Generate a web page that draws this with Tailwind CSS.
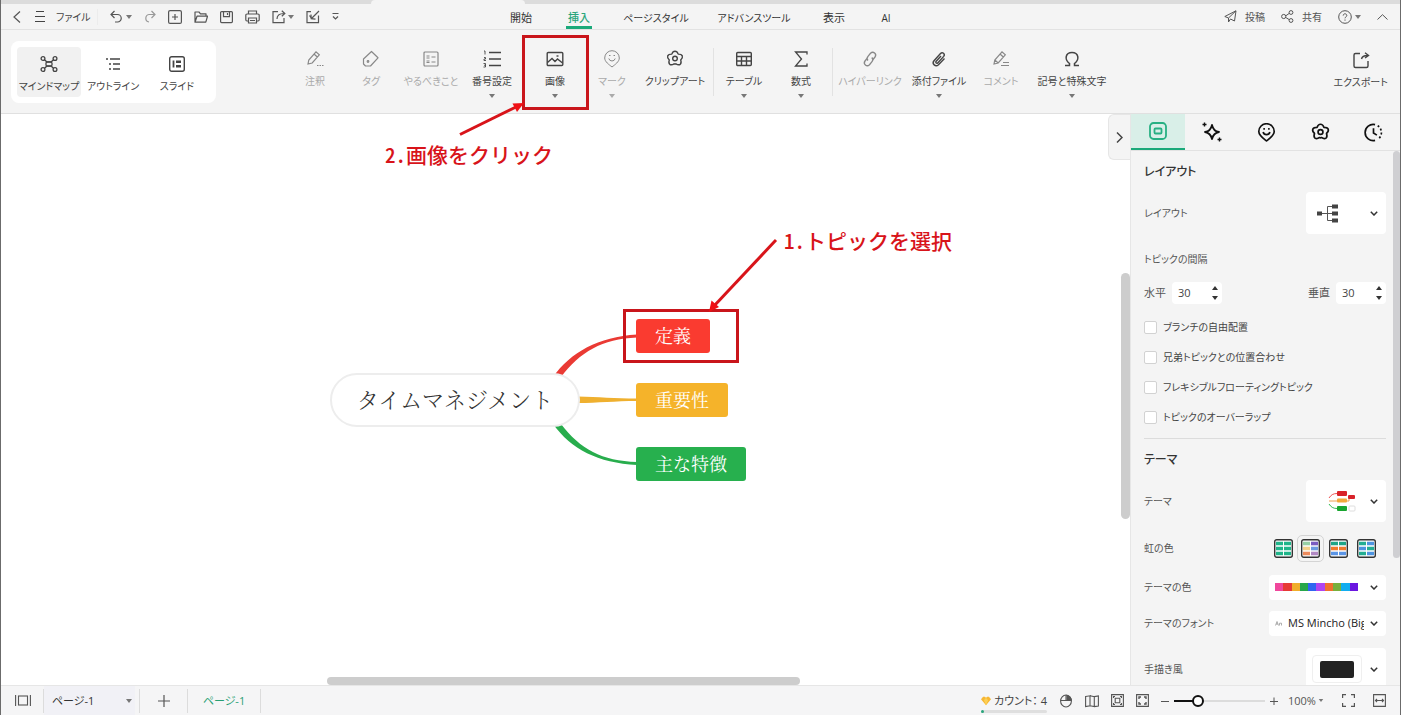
<!DOCTYPE html>
<html lang="ja">
<head>
<meta charset="utf-8">
<meta name="viewport" content="width=device-width, initial-scale=1">
<title>マインドマップ</title>
<script src="https://cdn.jsdelivr.net/npm/@tailwindcss/browser@4"></script>
</head>
<body class="bg-white">
<svg class="hidden">
  <symbol id="caret" viewBox="0 0 6 4"><path d="M0 0h6L3 4z" fill="currentColor"/></symbol>
  <symbol id="chev" viewBox="0 0 8 5"><path d="M.8.8 4 4 7.200.8" fill="none" stroke="currentColor" stroke-width="1.500"/></symbol>
  <symbol id="flower" viewBox="0 0 18 18"><path d="M9 1.200C10.600 1.200 11.700 2.600 12.200 4.100c1.600 0 3.400.3 4.100 1.800.6 1.500-.5 2.900-1.600 4 .5 1.500.8 3.300-.5 4.400-1.300.9-3 .3-4.300-.5-.6.3-1.200.3-1.800 0-1.300.8-3 1.400-4.300.5-1.300-1.100-1-2.900-.5-4.400-1.100-1.100-2.200-2.500-1.600-4 .7-1.500 2.500-1.800 4.100-1.800C6.300 2.600 7.400 1.200 9 1.200z" fill="none" stroke="currentColor" stroke-linejoin="round"/><circle cx="9" cy="8.500" r="2.300" fill="none" stroke="currentColor"/></symbol>
  <symbol id="pin" viewBox="0 0 18 18"><path d="M9 17C6 14.600 1.700 11.700 1.700 8a7.300 7.300 0 0 1 14.600 0c0 3.700-4.300 6.600-7.300 9z" fill="none" stroke="currentColor" stroke-linejoin="round"/><path d="M5.800 8.500a3.300 3.300 0 0 0 6.400 0" fill="none" stroke="currentColor"/><path d="M6 5.500h1.500M10.500 5.500H12" stroke="currentColor"/></symbol>
</svg>

<div class="relative flex h-screen flex-col overflow-hidden border-x border-[#6b6b6b] bg-[#f4f4f4] font-['Open_Sans','Noto_Sans_CJK_JP',sans-serif] text-[10px] leading-[14px] text-[#333] [font-feature-settings:'palt']">

  <!-- window tab strip -->
  <div class="flex h-1 shrink-0 bg-[#dcdcdc]"><div class="ml-[370px] w-[154px] rounded-t-sm bg-[#f4f4f4]"></div></div>

  <!-- title bar -->
  <header class="flex h-[26px] shrink-0 items-stretch border-b border-[#e2e2e2] text-[#555]">
    <div class="flex w-[492px] shrink-0 items-center">
      <button aria-label="戻る" class="ml-3 w-3"><svg class="h-3 w-2" viewBox="0 0 8 12" fill="none" stroke="currentColor" stroke-width="1.200"><path d="M7 .5 1 6l6 5.500"/></svg></button>
      <button class="ml-[10px] flex items-center gap-[10px] text-[#444]"><svg class="h-[11px] w-[11px]" viewBox="0 0 11 11" stroke="currentColor"><path d="M1 .5h8M0 5.500h10M0 10.500h10"/></svg>ファイル</button>
      <span class="ml-[6px] h-4 w-px bg-[#ececec]"></span>
      <button aria-label="元に戻す" class="ml-3 flex items-center gap-1"><svg class="h-[13px] w-3" viewBox="0 0 12 13" fill="none" stroke="currentColor" stroke-width="1.200"><path d="M4.500 1 1 4.500 4.500 8M1 4.500h6.500a3.500 3.500 0 0 1 0 7.500H5"/></svg><svg class="h-1 w-[6px] text-[#777]"><use href="#caret"/></svg></button>
      <button aria-label="やり直す" class="ml-3 text-[#999]"><svg class="h-[13px] w-3" viewBox="0 0 12 13" fill="none" stroke="currentColor" stroke-width="1.200"><path d="M7.500 1 11 4.500 7.500 8M11 4.500H5A3.800 3.800 0 0 0 5 12"/></svg></button>
      <div class="ml-3 flex items-center gap-3">
        <button aria-label="新規"><svg class="size-[14px]" viewBox="0 0 14 14" fill="none" stroke="currentColor" stroke-width="1.200"><rect x=".6" y=".6" width="12.800" height="12.800" rx="1.500"/><path d="M7 4v6M4 7h6"/></svg></button>
        <button aria-label="開く"><svg class="size-[14px]" viewBox="0 0 14 14" fill="none" stroke="currentColor" stroke-width="1.200" stroke-linejoin="round"><path d="M1 12V2h4l1.500 1.800H12V6M1 12.200 3 6.200h10.500l-1.700 6z"/></svg></button>
        <button aria-label="保存"><svg class="h-[14px] w-[13px]" viewBox="0 0 13 14" fill="none" stroke="currentColor" stroke-width="1.200"><rect x=".6" y="1.600" width="11.800" height="11" rx="1"/><path d="M3.500 1.600v5h6v-5M7.500 3v2"/></svg></button>
        <button aria-label="印刷"><svg class="h-[14px] w-[15px]" viewBox="0 0 15 14" fill="none" stroke="currentColor" stroke-width="1.200"><path d="M3.500 4V1h8v3M3.500 11H2a1.200 1.200 0 0 1-1.200-1.200V5.200A1.200 1.200 0 0 1 2 4h11a1.200 1.200 0 0 1 1.200 1.200v4.600A1.200 1.200 0 0 1 13 11h-1.500"/><path d="M3.500 8h8v5h-8zM5 10.500h5"/></svg></button>
        <button aria-label="共有先" class="flex items-center gap-[2px]"><svg class="size-[14px]" viewBox="0 0 14 14" fill="none" stroke="currentColor" stroke-width="1.200"><path d="M6 1.600H1v11h11V8"/><path d="M5 9c0-3.500 2-5.500 7-5.500M9.800.8l3 2.700-3 2.700"/></svg><svg class="h-1 w-[6px] text-[#777]"><use href="#caret"/></svg></button>
        <button aria-label="取り込み"><svg class="size-[14px]" viewBox="0 0 14 14" fill="none" stroke="currentColor" stroke-width="1.200"><path d="M5 1.600H1v11h11.500V5.500"/><path d="M13 1 5.500 8.500M9.500 9.200 5.200 8.700 5 4.500M3.500 5.500l2 3"/></svg></button>
        <button aria-label="その他"><svg class="h-[9px] w-[7px]" viewBox="0 0 7 9" fill="none" stroke="currentColor" stroke-width="1.200"><path d="M.5 1.500h6M1 4.500 3.500 7 6 4.500"/></svg></button>
      </div>
    </div>
    <nav class="flex shrink-0 text-[#333]">
      <button class="w-14 pt-[2px] text-[11px]">開始</button>
      <button class="relative w-[60px] pt-[2px] text-[11px] font-medium text-[#2aa57c]">挿入<span class="absolute bottom-0 left-[17px] h-[3px] w-[26px] bg-[#1aa97a]"></span></button>
      <button class="w-[94px] pt-[2px]">ページスタイル</button>
      <button class="w-[102px] pt-[2px]">アドバンスツール</button>
      <button class="w-[58px] pt-[2px] text-[11px]">表示</button>
      <button class="w-[46px] pt-[2px]">AI</button>
    </nav>
    <div class="ml-auto flex items-center pr-3">
      <button class="flex items-center gap-2"><svg class="h-[13px] w-[13px]" viewBox="0 0 13 13" fill="none" stroke="currentColor" stroke-linejoin="round"><path d="M.8 6.500 12 .8 10.500 11 6.500 9 4.500 12V8zM4.500 8 12 .8"/></svg>投稿</button>
      <button class="ml-4 flex items-center gap-2"><svg class="h-[13px] w-[13px]" viewBox="0 0 13 13" fill="none" stroke="currentColor"><circle cx="2.700" cy="6.500" r="2.100"/><circle cx="10" cy="2.500" r="1.900"/><circle cx="10" cy="10.500" r="1.900"/><path d="M4.800 5.800 8.200 3.400M4.800 7.500 8.200 9.600"/></svg>共有</button>
      <button aria-label="ヘルプ" class="ml-4 flex items-center gap-[3px]"><svg class="size-[14px]" viewBox="0 0 14 14" fill="none" stroke="currentColor"><circle cx="7" cy="7" r="6.300"/><path d="M5.200 5.600c0-2.400 3.600-2.400 3.600 0 0 1.200-1.800 1.300-1.800 2.700M7 9.500v1.200"/></svg><svg class="h-1 w-[6px] text-[#777]"><use href="#caret"/></svg></button>
      <button aria-label="折りたたむ" class="ml-4"><svg class="h-[6px] w-[11px]" viewBox="0 0 11 6" fill="none" stroke="currentColor"><path d="M.5 5.500 5.500.7l5 4.800"/></svg></button>
    </div>
  </header>

  <!-- ribbon -->
  <section class="flex h-[84px] shrink-0 border-b border-[#e0e0e0] text-[#444]">
    <div class="ml-[10px] mt-[11px] flex h-[62px] w-[205px] shrink-0 rounded-lg bg-white p-[6px]">
      <button class="flex w-16 flex-col items-center rounded bg-[#f1f1f1] pt-2"><svg class="size-[18px]" viewBox="0 0 18 18" fill="none" stroke="currentColor" stroke-width="1.300"><circle cx="3" cy="3.500" r="1.900"/><circle cx="15" cy="3.500" r="1.900"/><circle cx="3" cy="14.500" r="1.900"/><circle cx="15" cy="14.500" r="1.900"/><path d="M4.500 4.800 7 7h4l2.500-2.200M4.500 13.200 7 11h4l2.500 2.200"/><rect x="6" y="6.800" width="6" height="4.400" rx="1.500"/></svg><span class="mt-[6px]">マインドマップ</span></button>
      <button class="flex w-16 flex-col items-center pt-2"><svg class="size-[18px]" viewBox="0 0 18 18" stroke="currentColor" stroke-width="1.300"><path d="M2 4h2M6 4h10M5 9h2M9 9h7M5 14h2M9 14h7"/></svg><span class="mt-[6px]">アウトライン</span></button>
      <button class="flex w-16 flex-col items-center pt-2"><svg class="size-[18px]" viewBox="0 0 18 18" fill="none" stroke="currentColor" stroke-width="1.400"><rect x="1.700" y="1.700" width="14.600" height="14.600" rx="2"/><path d="M5.500 5.500v7" stroke-width="1.800"/><path d="M8 6.800h5M8 11.200h5" stroke-width="2.600"/></svg><span class="mt-[6px]">スライド</span></button>
    </div>
    <div class="ml-[75px] flex shrink-0">
      <button class="flex w-12 flex-col items-center pt-5 text-[#aaa]"><svg class="size-[18px] text-[#888]" viewBox="0 0 18 18" fill="none" stroke="currentColor" stroke-width="1.200"><path d="m2 14 .8-4L10 1.800l3.300 3L6.200 13zM8 4l3.300 3M11 15.500h1.500M13.500 15.500H15M16 15.500h1.500"/></svg><span class="mt-[6px]">注釈</span></button>
      <button class="flex w-16 flex-col items-center pt-5 text-[#aaa]"><svg class="size-[18px] text-[#888]" viewBox="0 0 18 18" fill="none" stroke="currentColor" stroke-width="1.200" stroke-linejoin="round"><path d="M9.500 1.500 16 7.800 8.500 16H3.500L1.500 14V9z"/><circle cx="6" cy="11.500" r=".8"/></svg><span class="mt-[6px]">タグ</span></button>
      <button class="flex w-14 flex-col items-center pt-5 text-[#aaa]"><svg class="size-[18px] text-[#888]" viewBox="0 0 18 18" fill="none" stroke="currentColor" stroke-width="1.200"><rect x="2" y="2" width="14" height="14" rx="1"/><path d="M4.500 6h3M4.500 8h3M9.500 7h4M4.500 11h3M4.500 12.500h3M9.500 12h4"/></svg><span class="mt-[6px]">やるべきこと</span></button>
      <button class="flex w-[66px] flex-col items-center pt-5"><svg class="h-[18px] w-5" viewBox="0 0 20 18" fill="none" stroke="currentColor" stroke-width="1.300"><path d="M7 2.500h12M7 9h12M7 15.500h12"/><path d="M2 1h1v3.500M2 7.500h1.500v1.500H2v1.500h2M1.500 13.500h2v3.500h-2M2 15.200h1.500" stroke-width=".9"/></svg><span class="mt-[6px]">番号設定</span><svg class="mt-[6px] h-1 w-[6px] text-[#777]"><use href="#caret"/></svg></button>
      <button class="relative flex w-[60px] flex-col items-center pt-5"><svg class="size-[18px]" viewBox="0 0 18 18" fill="none" stroke="currentColor" stroke-width="1.400"><rect x="1.200" y="2.500" width="15.600" height="13" rx="1"/><path d="m1.500 12.500 4.500-4 3 3 2.500-2.500 5 4"/><path d="M10.500 6h2"/></svg><span class="mt-[6px]">画像</span><svg class="mt-[6px] h-1 w-[6px] text-[#777]"><use href="#caret"/></svg>
        <span class="absolute -left-[3px] top-[5px] h-[75px] w-[67px] border-3 border-[#c9151b]"></span></button>
      <button class="flex w-[54px] flex-col items-center pt-5 text-[#aaa]"><svg class="size-[18px] text-[#888]"><use href="#pin"/></svg><span class="mt-[6px]">マーク</span><svg class="mt-[6px] h-1 w-[6px]"><use href="#caret"/></svg></button>
      <button class="flex w-[72px] flex-col items-center pt-5"><svg class="size-[18px] stroke-[1.4]"><use href="#flower"/></svg><span class="mt-[6px]">クリップアート</span></button>
      <span class="mx-[2px] mt-[18px] h-12 w-px bg-[#e2e2e2]"></span>
      <button class="flex w-14 flex-col items-center pt-5"><svg class="size-[18px]" viewBox="0 0 18 18" fill="none" stroke="currentColor" stroke-width="1.400"><rect x="1.700" y="2.500" width="14.600" height="13" rx="1"/><path d="M2 6.500h14M2 11h14M6.500 6.500v9M11.500 6.500v9"/></svg><span class="mt-[6px]">テーブル</span><svg class="mt-[6px] h-1 w-[6px] text-[#777]"><use href="#caret"/></svg></button>
      <button class="flex w-[58px] flex-col items-center pt-5"><svg class="size-[18px]" viewBox="0 0 18 18" fill="none" stroke="currentColor" stroke-width="1.300"><path d="M15 4.500V2H3.500l6 7-6 7H15v-2.500"/></svg><span class="mt-[6px]">数式</span><svg class="mt-[6px] h-1 w-[6px] text-[#777]"><use href="#caret"/></svg></button>
      <span class="ml-[2px] mr-[3px] mt-[18px] h-12 w-px bg-[#e2e2e2]"></span>
      <button class="flex w-[68px] flex-col items-center pt-5 text-[#aaa]"><svg class="size-[18px] text-[#888]" viewBox="0 0 18 18" fill="none" stroke="currentColor" stroke-width="1.300"><path d="M7 10.500C5.500 9 6 7.500 7 6.300l2.500-3c2.700-2.700 6.700.6 4.500 3.700L12 9.500"/><path d="M10.800 7.500C12.300 9 12 10.500 11 11.700l-2.500 3c-2.700 2.700-6.700-.6-4.500-3.700L6 8.500"/></svg><span class="mt-[6px]">ハイパーリンク</span></button>
      <button class="flex w-[70px] flex-col items-center pt-5"><svg class="size-[18px]" viewBox="0 0 18 18" fill="none" stroke="currentColor" stroke-width="1.400"><path d="m14.500 8.500-6 6.200c-3 2.800-7-1-4.500-4l6.500-7.200c2-2 5 .6 3.200 2.900l-6 6.500c-1 1-2.500-.2-1.700-1.400l5-5.500"/></svg><span class="mt-[6px]">添付ファイル</span><svg class="mt-[6px] h-1 w-[6px] text-[#777]"><use href="#caret"/></svg></button>
      <button class="flex w-[54px] flex-col items-center pt-5 text-[#aaa]"><svg class="size-[18px] text-[#888]" viewBox="0 0 18 18" fill="none" stroke="currentColor" stroke-width="1.200"><path d="m2 14 .8-4L10 1.800l3.300 3L6.200 13zM8 4l3.300 3M2.800 10l3.400 3M11 12.500h6M9 15.500h8"/></svg><span class="mt-[6px]">コメント</span></button>
      <button class="flex w-[88px] flex-col items-center pt-5"><svg class="size-[18px]" viewBox="0 0 18 18" fill="none" stroke="currentColor" stroke-width="1.500"><path d="M2 15.500h4.500v-2C1 9.500 2.500 2.500 9 2.500s8 7 2.500 11v2H16"/></svg><span class="mt-[6px]">記号と特殊文字</span><svg class="mt-[6px] h-1 w-[6px] text-[#777]"><use href="#caret"/></svg></button>
    </div>
    <button class="ml-auto mr-3 flex flex-col items-center pt-[21px]"><svg class="size-[18px]" viewBox="0 0 18 18" fill="none" stroke="currentColor" stroke-width="1.400"><path d="M8 2.500H3.500a1.500 1.500 0 0 0-1.500 1.500v11a1.500 1.500 0 0 0 1.500 1.500h11A1.500 1.500 0 0 0 16 15v-5"/><path d="M9.500 8c.5-2.500 2.500-3.500 6-3.500M13 1.800l3.500 2.700L13 7"/></svg><span class="mt-[6px]">エクスポート</span></button>
  </section>

  <div class="flex min-h-0 flex-1">
    <!-- map canvas -->
    <main class="relative min-w-0 flex-1 overflow-hidden bg-white font-['Noto_Serif_CJK_JP','Noto_Sans_CJK_JP',serif]">
      <svg class="absolute left-0 top-0 h-[571px] w-[1130px]" viewBox="1 114 1130 571">
        <path d="M553 377C571 352 598 337 637 334.500v3C602 339 580 352 561 377z" fill="#ea3a34"/>
        <path d="M578 396.500C598 397 615 398.500 637 398.500v2.500C615 401 598 403 578 403z" fill="#efb02f"/>
        <path d="M553 424C571 449 598 463 637 465v-3C602 461 580 449 561 424z" fill="#28ad4d"/>
      </svg>
      <div class="absolute left-[329px] top-[259px] flex h-[54px] w-[250px] items-center justify-center rounded-full border-2 border-[#ededed] bg-white pb-[3px] text-[22px] font-light text-[#333] [font-feature-settings:normal]">タイムマネジメント</div>
      <div class="absolute left-[635px] top-[205px] flex h-[34px] w-[74px] items-center justify-center rounded-[3px] bg-[#fa3b30] pb-[2px] text-[18px] text-white">定義</div>
      <div class="absolute left-[635px] top-[269px] flex h-[34px] w-[92px] items-center justify-center rounded-[3px] bg-[#f5b32a] pb-[2px] text-[18px] text-white">重要性</div>
      <div class="absolute left-[635px] top-[333px] flex h-[34px] w-[110px] items-center justify-center rounded-[3px] bg-[#27b04e] pb-[2px] text-[18px] text-white [font-feature-settings:normal]">主な特徴</div>

      <div class="absolute left-[622px] top-[195px] h-[54px] w-[116px] border-3 border-[#c9151b]"></div>
      <svg class="absolute left-[705px] top-[123px] h-[76px] w-[74px]" viewBox="706 237 74 76"><path d="M776 240 714 306" stroke="#d8141a" stroke-width="3"/><path d="m709 312 2.500-11.500 7.500 6.500z" fill="#f01015"/></svg>
      <p class="absolute left-[384px] top-[27px] whitespace-nowrap font-['Noto_Sans_CJK_JP',sans-serif] text-[21px] font-medium leading-[26px] text-[#d8141a] [font-feature-settings:'hwid']">2.画像をクリック</p>
      <p class="absolute left-[783px] top-[113px] whitespace-nowrap font-['Noto_Sans_CJK_JP',sans-serif] text-[21px] font-medium leading-[26px] text-[#d8141a] [font-feature-settings:'hwid']">1.トピックを選択</p>

      <div class="absolute right-0 top-[159px] h-[246px] w-[9px] rounded-full bg-[#cdcdcd]"></div>
      <div class="absolute bottom-0 left-[326px] h-2 w-[473px] rounded-full bg-[#cdcdcd]"></div>
      <button aria-label="パネルを閉じる" class="absolute right-0 top-0 flex h-[46px] w-[22px] items-center justify-center rounded-l-md border border-r-0 border-[#e6e6e6] bg-[#f4f4f4]"><svg class="h-[13px] w-[7px]" viewBox="0 0 7 13" fill="none" stroke="#444" stroke-width="1.500"><path d="m1 1.500 5 5-5 5"/></svg></button>
    </main>

    <!-- format panel -->
    <aside class="relative flex w-[270px] shrink-0 flex-col overflow-hidden border-l border-[#e6e6e6] text-[#555]">
      <div class="flex h-[37px] shrink-0 border-b border-[#e2e2e2] text-[#111]">
        <button aria-label="キャンバス" class="flex w-[54px] items-center justify-center border-b-2 border-[#1aa97a] bg-[#d9efe8] text-[#27b083]"><svg class="size-[18px]" viewBox="0 0 18 18" fill="none" stroke="currentColor" stroke-width="1.800"><rect x="1" y="1" width="16" height="16" rx="3.500"/><rect x="5.500" y="6.500" width="7" height="5" rx="1"/></svg></button>
        <button aria-label="AI" class="flex w-[54px] items-center justify-center"><svg class="size-5" viewBox="0 0 20 20" fill="none" stroke="currentColor" stroke-width="1.800" stroke-linejoin="round"><path d="M10 3c1 4.500 3 6.500 7 7-4 .7-6 2.700-7 7-1-4.300-3-6.300-7-7 4-.5 6-2.500 7-7z"/><path d="M2.500.5v4M.5 2.500h4M17.500 15.500v4M15.500 17.500h4" stroke-width="1.400"/></svg></button>
        <button aria-label="マーク" class="flex w-[54px] items-center justify-center"><svg class="size-[19px] stroke-[1.6]"><use href="#pin"/></svg></button>
        <button aria-label="クリップアート" class="flex w-[54px] items-center justify-center"><svg class="size-[19px] stroke-[1.6]"><use href="#flower"/></svg></button>
        <button aria-label="履歴" class="flex w-[53px] items-center justify-center"><svg class="size-[19px]" viewBox="0 0 18 18" fill="none" stroke="currentColor" stroke-width="1.600"><path d="M10.500 1.500a7.700 7.700 0 1 0 0 15M9 5v4.500l3.200 2"/><path d="M13 2.600A7.700 7.700 0 0 1 13 15.500" stroke-dasharray="1.800 2"/></svg></button>
      </div>
      <div class="flex min-h-0 flex-1 flex-col overflow-hidden pl-[13px] pr-[14px]">
        <h2 class="flex h-10 shrink-0 items-center pt-px text-[12px] font-medium text-[#333]">レイアウト</h2>
        <div class="flex h-11 shrink-0 items-center justify-between">レイアウト
          <button aria-label="レイアウト" class="flex h-[42px] w-20 items-center justify-between rounded bg-white pl-[11px] pr-2 text-[#333]"><svg class="h-[19px] w-[21px]" viewBox="0 0 21 19" fill="none" stroke="#555"><path d="M4 9.500h11M10.500 2.500v14M10.500 2.500H15M10.500 16.500H15"/><g fill="#444" stroke="none"><rect y="7.500" width="5" height="4"/><rect x="15" y=".5" width="6" height="4"/><rect x="15" y="7.500" width="6" height="4"/><rect x="15" y="14.500" width="6" height="4"/></g></svg><svg class="h-[5px] w-2"><use href="#chev"/></svg></button>
        </div>
        <div class="flex h-[47px] shrink-0 items-center">トピックの間隔</div>
        <div class="flex h-[22px] shrink-0 items-center justify-between">
          <div class="flex items-center gap-[6px] text-[11px]"><label for="sx">水平</label><div class="flex h-[22px] w-[50px] items-center rounded bg-white"><input id="sx" type="text" inputmode="numeric" value="30" class="w-10 pl-[6px] text-[#444] outline-none"><span class="flex flex-col gap-[6px] text-[#333]"><button aria-label="増やす" class="flex"><svg class="h-1 w-[6px] rotate-180"><use href="#caret"/></svg></button><button aria-label="減らす" class="flex"><svg class="h-1 w-[6px]"><use href="#caret"/></svg></button></span></div></div>
          <div class="flex items-center gap-[6px] text-[11px]"><label for="sy">垂直</label><div class="flex h-[22px] w-[50px] items-center rounded bg-white"><input id="sy" type="text" inputmode="numeric" value="30" class="w-10 pl-[6px] text-[#444] outline-none"><span class="flex flex-col gap-[6px] text-[#333]"><button aria-label="増やす" class="flex"><svg class="h-1 w-[6px] rotate-180"><use href="#caret"/></svg></button><button aria-label="減らす" class="flex"><svg class="h-1 w-[6px]"><use href="#caret"/></svg></button></span></div></div>
        </div>
        <div class="mt-2 flex shrink-0 flex-col border-b border-[#dcdcdc] pb-[6px] text-[#444]">
          <label class="flex h-[30px] items-center gap-[6px]"><input type="checkbox" class="size-[13px] appearance-none rounded-xs border border-[#d2d2d2] bg-white">ブランチの自由配置</label>
          <label class="flex h-[30px] items-center gap-[6px]"><input type="checkbox" class="size-[13px] appearance-none rounded-xs border border-[#d2d2d2] bg-white">兄弟トピックとの位置合わせ</label>
          <label class="flex h-[30px] items-center gap-[6px]"><input type="checkbox" class="size-[13px] appearance-none rounded-xs border border-[#d2d2d2] bg-white">フレキシブルフローティングトピック</label>
          <label class="flex h-[30px] items-center gap-[6px]"><input type="checkbox" class="size-[13px] appearance-none rounded-xs border border-[#d2d2d2] bg-white">トピックのオーバーラップ</label>
        </div>
        <h2 class="flex h-[41px] shrink-0 items-center pt-px text-[12px] font-medium text-[#333]">テーマ</h2>
        <div class="flex h-[42px] shrink-0 items-center justify-between">テーマ
          <button aria-label="テーマ" class="flex h-[42px] w-20 items-center justify-between rounded bg-white pl-3 pr-2 text-[#333]"><svg class="h-[22px] w-[38px]" viewBox="0 0 38 22" fill="none"><path d="M11 8c2-3 4-4.500 8-4.500" stroke="#e55"/><path d="M11 11h8M29 11h2V7h3" stroke="#f0a050"/><path d="M11 14c2 3 4 4.500 8 4.500" stroke="#3b5"/><rect x="19" y="1" width="10" height="5" rx="1" fill="#d8232a"/><rect x="30" y="5" width="7" height="4" rx="1" fill="#d8232a"/><rect x="19" y="8.500" width="10" height="4" rx="1" fill="#f2a93b"/><rect x="19" y="16" width="10" height="5" rx="1" fill="#18a52f"/><rect x="31" y="16" width="6" height="5" rx="1" stroke="#dedede"/></svg><svg class="h-[5px] w-2"><use href="#chev"/></svg></button>
        </div>
        <div class="flex h-[52px] shrink-0 items-center justify-between">虹の色
          <div class="flex items-center pr-[10px]">
            <button aria-label="単色"><svg class="size-[19px]" viewBox="0 0 19 19"><rect x=".7" y=".7" width="17.600" height="17.600" rx="2" fill="#fff" stroke="#333" stroke-width="1.400"/><path d="M2 4.500h7M10 4.500h7M2 9.500h7M10 9.500h7M2 14.500h7M10 14.500h7" stroke="#1fb58a" stroke-width="3.600"/></svg></button>
            <button aria-label="虹色" class="ml-1 flex size-[27px] items-center justify-center rounded-[5px] border border-[#d4d4d4]"><svg class="size-[19px]" viewBox="0 0 19 19"><rect x=".7" y=".7" width="17.600" height="17.600" rx="2" fill="#fff" stroke="#333" stroke-width="1.400"/><g stroke-width="3.600"><path d="M2 4.500h7" stroke="#97cfa4"/><path d="M10 4.500h7" stroke="#7a5cc0"/><path d="M2 9.500h7" stroke="#f3cf8a"/><path d="M10 9.500h7" stroke="#6d9be0"/><path d="M2 14.500h7" stroke="#ec8a5b"/><path d="M10 14.500h7" stroke="#b189c4"/></g></svg></button>
            <button aria-label="三色" class="ml-[5px]"><svg class="size-[19px]" viewBox="0 0 19 19"><rect x=".7" y=".7" width="17.600" height="17.600" rx="2" fill="#fff" stroke="#333" stroke-width="1.400"/><g stroke-width="3.600"><path d="M2 4.500h7M10 4.500h7" stroke="#1fa588"/><path d="M2 9.500h7M10 9.500h7" stroke="#f07a2e"/><path d="M2 14.500h7M10 14.500h7" stroke="#5b95e6"/></g></svg></button>
            <button aria-label="二色" class="ml-[9px]"><svg class="size-[19px]" viewBox="0 0 19 19"><rect x=".7" y=".7" width="17.600" height="17.600" rx="2" fill="#fff" stroke="#333" stroke-width="1.400"/><g stroke-width="3.600"><path d="M2 4.500h7M2 14.500h7M10 9.500h7" stroke="#23ad93"/><path d="M10 4.500h7M2 9.500h7M10 14.500h7" stroke="#4d94e0"/></g></svg></button>
          </div>
        </div>
        <div class="flex h-[26px] shrink-0 items-center justify-between">テーマの色
          <button aria-label="テーマの色" class="flex h-[25px] w-[117px] items-center justify-between rounded bg-white pl-[6px] pr-2 text-[#333]"><span class="flex h-2 w-[83px]"><i class="flex-1 bg-[#f0479c]"></i><i class="flex-1 bg-[#e63a35]"></i><i class="flex-1 bg-[#f0ae2b]"></i><i class="flex-1 bg-[#27a74a]"></i><i class="flex-1 bg-[#2f66f0]"></i><i class="flex-1 bg-[#b044f0]"></i><i class="flex-1 bg-[#f0702f]"></i><i class="flex-1 bg-[#78b03c]"></i><i class="flex-1 bg-[#12adf0]"></i><i class="flex-1 bg-[#6a16e0]"></i></span><svg class="h-[5px] w-2"><use href="#chev"/></svg></button>
        </div>
        <div class="mt-[10px] flex h-[26px] shrink-0 items-center justify-between"><label for="tf">テーマのフォント</label>
          <div class="flex h-[25px] w-[117px] items-center justify-between rounded bg-white pl-[6px] pr-2 text-[#333]"><svg class="h-[5px] w-[7px]" viewBox="0 0 7 5" fill="none" stroke="#999" stroke-width=".8"><path d="M.5 4.500 2 .5l1.500 4M1 3h2M4.500 4.500V2.200h2v2.300"/></svg><select id="tf" class="w-[76px] appearance-none overflow-hidden text-clip text-[11px] text-[#222] outline-none"><option>MS Mincho (Big)</option></select><svg class="h-[5px] w-2"><use href="#chev"/></svg></div>
        </div>
        <div class="mt-3 flex h-[42px] shrink-0 items-center justify-between">手描き風
          <button aria-label="手描き風" class="flex h-[42px] w-20 items-center justify-between rounded bg-white pl-[6px] pr-2 text-[#333]"><span class="flex h-7 w-[50px] items-center justify-center rounded-sm border border-[#efefef]"><i class="h-[17px] w-[34px] rounded-xs bg-[#222]"></i></span><svg class="h-[5px] w-2"><use href="#chev"/></svg></button>
        </div>
      </div>
      <div class="absolute right-0 top-[37px] h-[407px] w-[7px] rounded-full bg-[#cfcfd2]"></div>
    </aside>
  </div>

  <!-- status bar -->
  <footer class="flex h-[30px] shrink-0 items-center border-t border-[#e6e6e6] bg-[#f5f5f6] text-[#555]">
    <button aria-label="ページ一覧" class="ml-[14px]"><svg class="h-[11px] w-4" viewBox="0 0 16 11" fill="none" stroke="currentColor" stroke-width="1.100"><path d="M.6 0v11M15.400 0v11"/><rect x="3.500" y="1" width="9" height="9"/></svg></button>
    <span class="ml-3 h-6 w-px bg-[#dcdcdc]"></span>
    <label class="flex h-[29px] w-[91px] items-center bg-[#f1f1f6] pl-2"><select aria-label="ページ" class="w-[74px] appearance-none text-[11px] text-[#333] outline-none"><option>ページ-1</option></select><svg class="h-1 w-[6px] shrink-0 text-[#777]"><use href="#caret"/></svg></label>
    <span class="ml-1 h-6 w-px bg-[#dcdcdc]"></span>
    <button aria-label="ページを追加" class="flex w-[47px] justify-center"><svg class="size-3" viewBox="0 0 12 12" stroke="currentColor" stroke-width="1.200"><path d="M6 0v12M0 6h12"/></svg></button>
    <span class="h-6 w-px bg-[#dcdcdc]"></span>
    <button class="w-[72px] text-center text-[11px] text-[#2a9f74]">ページ-1</button>
    <span class="h-6 w-px bg-[#dcdcdc]"></span>

    <div class="relative ml-auto flex h-full w-[66px] items-center gap-[3px]"><svg class="h-[10px] w-3" viewBox="0 0 12 10"><path d="M2.500 0h2L6 1 7.500 0h2L12 3 6 10 0 3z" fill="#f7b733"/><path d="M6 1 8.500 4 6 10 3.500 4z" fill="#fbcf57"/></svg><span class="whitespace-nowrap text-[11px] text-[#444]">カウント： 4</span><span class="absolute bottom-[2px] left-0 h-[3px] w-full rounded-full bg-[#dfdfdf]"><i class="block size-[3px] rounded-full bg-[#2aa57c]"></i></span></div>
    <div class="ml-3 flex items-center gap-3">
      <button aria-label="マウス"><svg class="size-[14px]" viewBox="0 0 14 14" fill="none" stroke="currentColor" stroke-width="1.100"><ellipse cx="7" cy="7" rx="5.400" ry="6"/><path d="M7 1v5.500M1.600 6.500h10.800"/><path d="M8 1.500c2.500.5 4 2.300 4.200 4.500H8z" fill="currentColor"/></svg></button>
      <button aria-label="ナビゲーター"><svg class="size-[14px]" viewBox="0 0 14 14" fill="none" stroke="currentColor" stroke-width="1.100"><path d="M.6 2.500 5 1.800v10l-4.400.8zM5 1.800l4.300.8v10L5 11.800M9.300 2.600l4.100-.6v10l-4.100.6"/></svg></button>
      <button aria-label="全体表示"><svg class="size-[13px]" viewBox="0 0 13 13" fill="none" stroke="currentColor" stroke-width="1.100"><path d="M.6.6h11.800v11.800H.6z"/><path d="M4.200 4.200h4.600v4.600H4.200z"/><path d="M2.500 4V2.500H4M9 2.500h1.500V4M2.500 9v1.500H4M9 10.500h1.500V9"/></svg></button>
      <button aria-label="ウィンドウに合わせる"><svg class="size-[13px]" viewBox="0 0 13 13" fill="none" stroke="currentColor" stroke-width="1.100"><path d="M.6.6h11.800v11.800H.6z"/><path d="M3 5V3h2M8 3h2v2M3 8v2h2M8 10h2V8" stroke-width="1.400"/></svg></button>
    </div>
    <button aria-label="縮小" class="ml-3"><svg class="size-2" viewBox="0 0 8 8" stroke="currentColor"><path d="M0 4.500h8"/></svg></button>
    <input type="range" aria-label="ズーム" min="0" max="100" value="23" class="ml-[5px] h-3 w-[91px] appearance-none bg-transparent [&::-webkit-slider-runnable-track]:h-[2px] [&::-webkit-slider-runnable-track]:bg-[linear-gradient(to_right,#111_24px,#dcdcdc_24px)] [&::-webkit-slider-thumb]:-mt-[5px] [&::-webkit-slider-thumb]:size-3 [&::-webkit-slider-thumb]:appearance-none [&::-webkit-slider-thumb]:rounded-full [&::-webkit-slider-thumb]:border-2 [&::-webkit-slider-thumb]:border-[#111] [&::-webkit-slider-thumb]:bg-white">
    <button aria-label="拡大" class="ml-[5px]"><svg class="size-2" viewBox="0 0 8 8" stroke="currentColor"><path d="M0 4.500h8M4 .5v8"/></svg></button>
    <label class="ml-[10px] flex w-9 items-center"><select aria-label="倍率" class="w-[30px] appearance-none text-[11px] outline-none"><option>100%</option></select><svg class="h-[3px] w-[6px] shrink-0 text-[#777]"><use href="#caret"/></svg></label>
    <button aria-label="全画面" class="ml-[18px]"><svg class="size-[13px]" viewBox="0 0 13 13" fill="none" stroke="currentColor" stroke-width="1.200"><path d="M.6 4V.6H4M9 .6h3.400V4M.6 9v3.400H4M9 12.400h3.400V9"/></svg></button>
    <button aria-label="幅に合わせる" class="ml-[18px] mr-[14px]"><svg class="size-[13px]" viewBox="0 0 13 13" fill="none" stroke="currentColor" stroke-width="1.100"><path d="M.6.6h11.800v11.800H.6zM2.500 6.500h8M4 5 2.500 6.500 4 8M9 5l1.500 1.500L9 8"/></svg></button>
  </footer>

  <svg class="pointer-events-none absolute left-[456px] top-[101px] h-9 w-[68px]" viewBox="457 101 68 36"><path d="M460 134.500 516 107" stroke="#d8141a" stroke-width="3"/><path d="m524 103-7 9-4.500-8.500z" fill="#f01015"/></svg>
</div>
</body>
</html>
